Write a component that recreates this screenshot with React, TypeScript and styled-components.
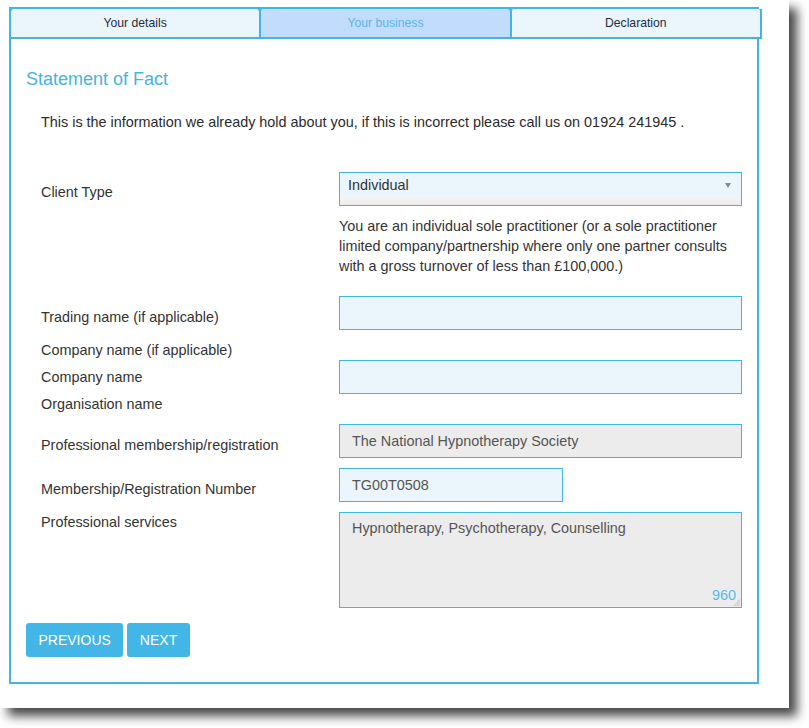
import React from "react";
import styled, { createGlobalStyle } from "styled-components";

const BLUE = "#43b5e5";
const FONT = `"Liberation Sans", Arial, sans-serif`;

const Global = createGlobalStyle`
  html, body { margin: 0; padding: 0; background: #fff; }
  body { font-family: ${FONT}; }
  * { box-sizing: border-box; }
`;

const Page = styled.div`
  width: 809px;
  height: 728px;
  overflow: hidden;
  background: #fff;
`;

const Screen = styled.div`
  width: 789px;
  height: 708px;
  background: #fff;
  box-shadow: 8px 8px 10px rgba(0, 0, 0, 0.72);
  padding: 7px 0 0 9px;
`;

const Panel = styled.div`
  width: 750px;
  border: 2px solid ${BLUE};
  padding-bottom: 25px;
`;

const TabBar = styled.div`
  display: flex;
  margin-right: -5px;
  background: ${BLUE};
  border-bottom: 2px solid ${BLUE};
`;

const Tab = styled.div<{ $active?: boolean; $first?: boolean; $last?: boolean }>`
  flex: 1;
  height: 28px;
  line-height: 28px;
  text-align: center;
  font-size: 12.2px;
  border-radius: 3px 3px 0 0;
  background: ${(p) => (p.$active ? "#c1dcfc" : "#eaf5fc")};
  color: ${(p) => (p.$active ? "#58b7ea" : "#1d2c48")};
  border-left: ${(p) => (p.$first ? "none" : `2px solid ${BLUE}`)};
  border-right: ${(p) => (p.$last ? `2px solid ${BLUE}` : "none")};
`;

const Content = styled.div`
  padding: 0 15px;
`;

const Heading = styled.h2`
  margin: 29px 0 0;
  font-size: 18px;
  line-height: 22px;
  font-weight: normal;
  color: #45b4e3;
`;

const Intro = styled.p`
  margin: 22px 0 0;
  padding-left: 15px;
  font-size: 14.4px;
  line-height: 20px;
  color: #2b2b2b;
`;

const Form = styled.div`
  margin-top: 40px;
  padding-left: 15px;
  display: grid;
  grid-template-columns: 298px 403px;
  row-gap: 10px;
`;

const Label = styled.div<{ $offset?: number }>`
  padding-top: ${(p) => p.$offset ?? 0}px;
  font-size: 14.4px;
  line-height: 20px;
  color: #333;
`;

const LabelStack = styled.div`
  display: flex;
  flex-direction: column;
  gap: 7px;
`;

const Field = styled.div<{ $center?: boolean }>`
  align-self: ${(p) => (p.$center ? "center" : "start")};
  position: relative;
`;

const Select = styled.div`
  position: relative;
  height: 34px;
  border: 1px solid ${BLUE};
  padding: 2px 8px;
  font-size: 14.4px;
  line-height: 20px;
  color: #333;
  background: linear-gradient(to bottom, #eaf5fc 0, #eaf5fc 23px, #f4f4f4 24px, #ececec 100%);
`;

const Caret = styled.span`
  position: absolute;
  right: 10px;
  top: 10px;
  width: 0;
  height: 0;
  border-left: 3px solid transparent;
  border-right: 3px solid transparent;
  border-top: 5px solid #8a8a8a;
`;

const Description = styled.p`
  margin: 10px 0 10px;
  font-size: 14.4px;
  line-height: 20px;
  color: #333;
`;

const Input = styled.input<{ $grey?: boolean; $width?: number }>`
  display: block;
  width: ${(p) => (p.$width ? `${p.$width}px` : "100%")};
  height: 34px;
  margin: 0;
  border: 1px solid ${BLUE};
  border-radius: 0;
  padding: 0 12px;
  font-family: ${FONT};
  font-size: 14.4px;
  line-height: 20px;
  color: #555;
  background: ${(p) => (p.$grey ? "#ececec" : "#eaf5fc")};
  outline: none;
`;

const TextArea = styled.textarea`
  display: block;
  width: 100%;
  height: 96px;
  margin: 0;
  border: 1px solid ${BLUE};
  border-radius: 0;
  padding: 5px 12px;
  font-family: ${FONT};
  font-size: 14.4px;
  line-height: 20px;
  color: #555;
  background: #ececec;
  outline: none;
  resize: none;
`;

const Grip = styled.span`
  position: absolute;
  right: 2px;
  bottom: 2px;
  width: 7px;
  height: 7px;
  background: linear-gradient(135deg, transparent 50%, #d8d8d8 50%);
`;

const Counter = styled.span`
  position: absolute;
  right: 6px;
  bottom: 3px;
  font-size: 14.4px;
  line-height: 20px;
  color: #55bce9;
`;

const Buttons = styled.div`
  margin-top: 15px;
  display: flex;
  gap: 4px;
`;

const Button = styled.button`
  height: 34px;
  padding: 0 12.5px;
  border: none;
  border-radius: 3px;
  background: #42b6e6;
  color: #fff;
  font-family: ${FONT};
  font-size: 14px;
  text-transform: uppercase;
  cursor: pointer;
`;

export default function App() {
  return (
    <>
      <Global />
      <Page>
        <Screen>
          <Panel>
            <TabBar>
              <Tab $first>Your details</Tab>
              <Tab $active>Your business</Tab>
              <Tab $last>Declaration</Tab>
            </TabBar>
            <Content>
              <Heading>Statement of Fact</Heading>
              <Intro>
                This is the information we already hold about you, if this is incorrect please call us on 01924 241945 .
              </Intro>
              <Form>
                <Label $offset={10}>Client Type</Label>
                <Field>
                  <Select>
                    Individual
                    <Caret />
                  </Select>
                  <Description>
                    You are an individual sole practitioner (or a sole practitioner limited company/partnership where only one partner consults with a gross turnover of less than £100,000.)
                  </Description>
                </Field>

                <Label $offset={11}>Trading name (if applicable)</Label>
                <Field>
                  <Input readOnly defaultValue="" />
                </Field>

                <LabelStack>
                  <Label>Company name (if applicable)</Label>
                  <Label>Company name</Label>
                  <Label>Organisation name</Label>
                </LabelStack>
                <Field $center>
                  <Input readOnly defaultValue="" />
                </Field>

                <Label $offset={11}>Professional membership/registration</Label>
                <Field>
                  <Input $grey readOnly defaultValue="The National Hypnotherapy Society" />
                </Field>

                <Label $offset={11}>Membership/Registration Number</Label>
                <Field>
                  <Input $width={224} readOnly defaultValue="TG00T0508" />
                </Field>

                <Label>Professional services</Label>
                <Field>
                  <TextArea readOnly defaultValue="Hypnotherapy, Psychotherapy, Counselling" />
                  <Grip />
                  <Counter>960</Counter>
                </Field>
              </Form>
              <Buttons>
                <Button>Previous</Button>
                <Button>Next</Button>
              </Buttons>
            </Content>
          </Panel>
        </Screen>
      </Page>
    </>
  );
}
